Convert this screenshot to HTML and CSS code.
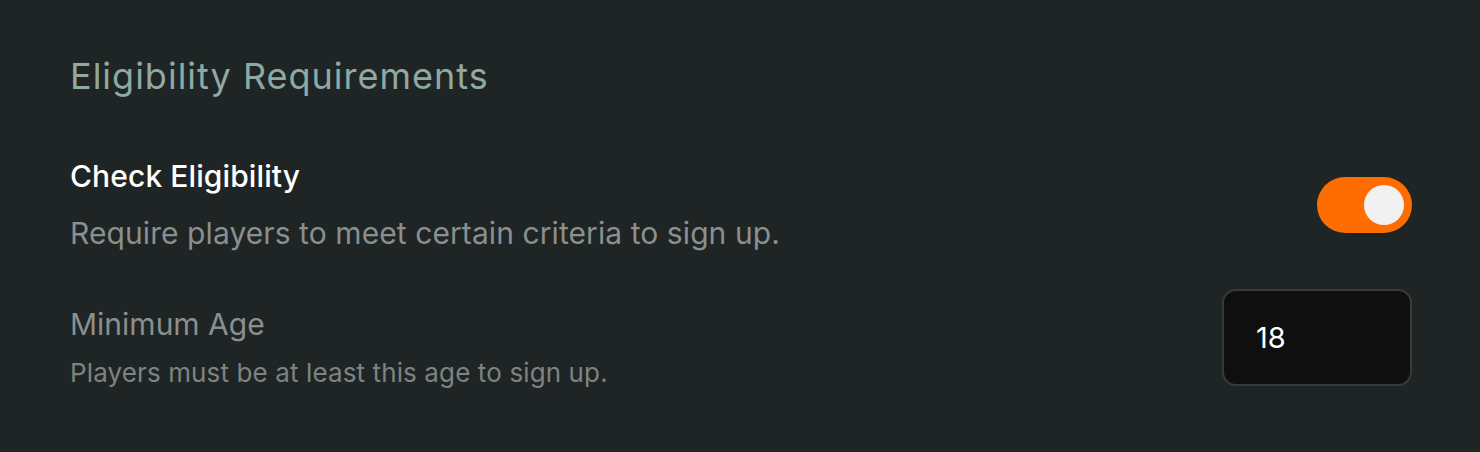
FILE: index.html
```html
<!DOCTYPE html>
<html lang="en">
<head>
<meta charset="utf-8">
<link rel="stylesheet" href="styles.css">
</head>
<body>
<section class="panel">
  <h2 class="title">Eligibility Requirements</h2>
  <div class="row row-check">
    <div class="text">
      <div class="label">Check Eligibility</div>
      <div class="desc">Require players to meet certain criteria to sign up.</div>
    </div>
    <div class="toggle"><span class="knob"></span></div>
  </div>
  <div class="row row-age">
    <div class="text text-age">
      <div class="label-muted">Minimum Age</div>
      <div class="desc-small">Players must be at least this age to sign up.</div>
    </div>
    <div class="input">18</div>
  </div>
</section>
</body>
</html>
```
FILE: styles.css
```css
html, body {
  margin: 0;
  padding: 0;
  background: #1f2525;
  font-family: "Inter", "Liberation Sans", sans-serif;
}
.panel {
  padding: 52px 68px 0 70px;
}
.title {
  margin: 0;
  font-size: 36px;
  font-weight: 400;
  letter-spacing: 1px;
  color: #8fa9a3;
  line-height: 48px;
}
.row {
  display: flex;
  align-items: center;
  justify-content: space-between;
}
.row-check {
  margin-top: 56px;
}
.row-age {
  margin-top: 36px;
  align-items: flex-start;
}
.text-age {
  padding-top: 15px;
}
.label {
  font-size: 30px;
  font-weight: 500;
  letter-spacing: 0.1px;
  color: #ffffff;
  line-height: 40px;
}
.desc {
  font-size: 30px;
  letter-spacing: 0.08px;
  color: #8b8f8e;
  line-height: 40px;
  margin-top: 17px;
}
.label-muted {
  font-size: 30px;
  color: #8b8f8e;
  line-height: 40px;
}
.desc-small {
  font-size: 26px;
  letter-spacing: 0.12px;
  color: #7e8382;
  line-height: 32px;
  margin-top: 13px;
}
.toggle {
  width: 95px;
  height: 56px;
  border-radius: 28px;
  background: #ff6d00;
  display: flex;
  align-items: center;
  justify-content: flex-end;
  padding-right: 8px;
  box-sizing: border-box;
}
.knob {
  width: 40px;
  height: 40px;
  border-radius: 50%;
  background: #f1f1f1;
}
.input {
  width: 190px;
  height: 97px;
  box-sizing: border-box;
  background: #0f0f0f;
  border: 2px solid #363b3b;
  border-radius: 14px;
  padding-left: 32px;
  display: flex;
  align-items: center;
  font-size: 29px;
  color: #ffffff;
}
```
